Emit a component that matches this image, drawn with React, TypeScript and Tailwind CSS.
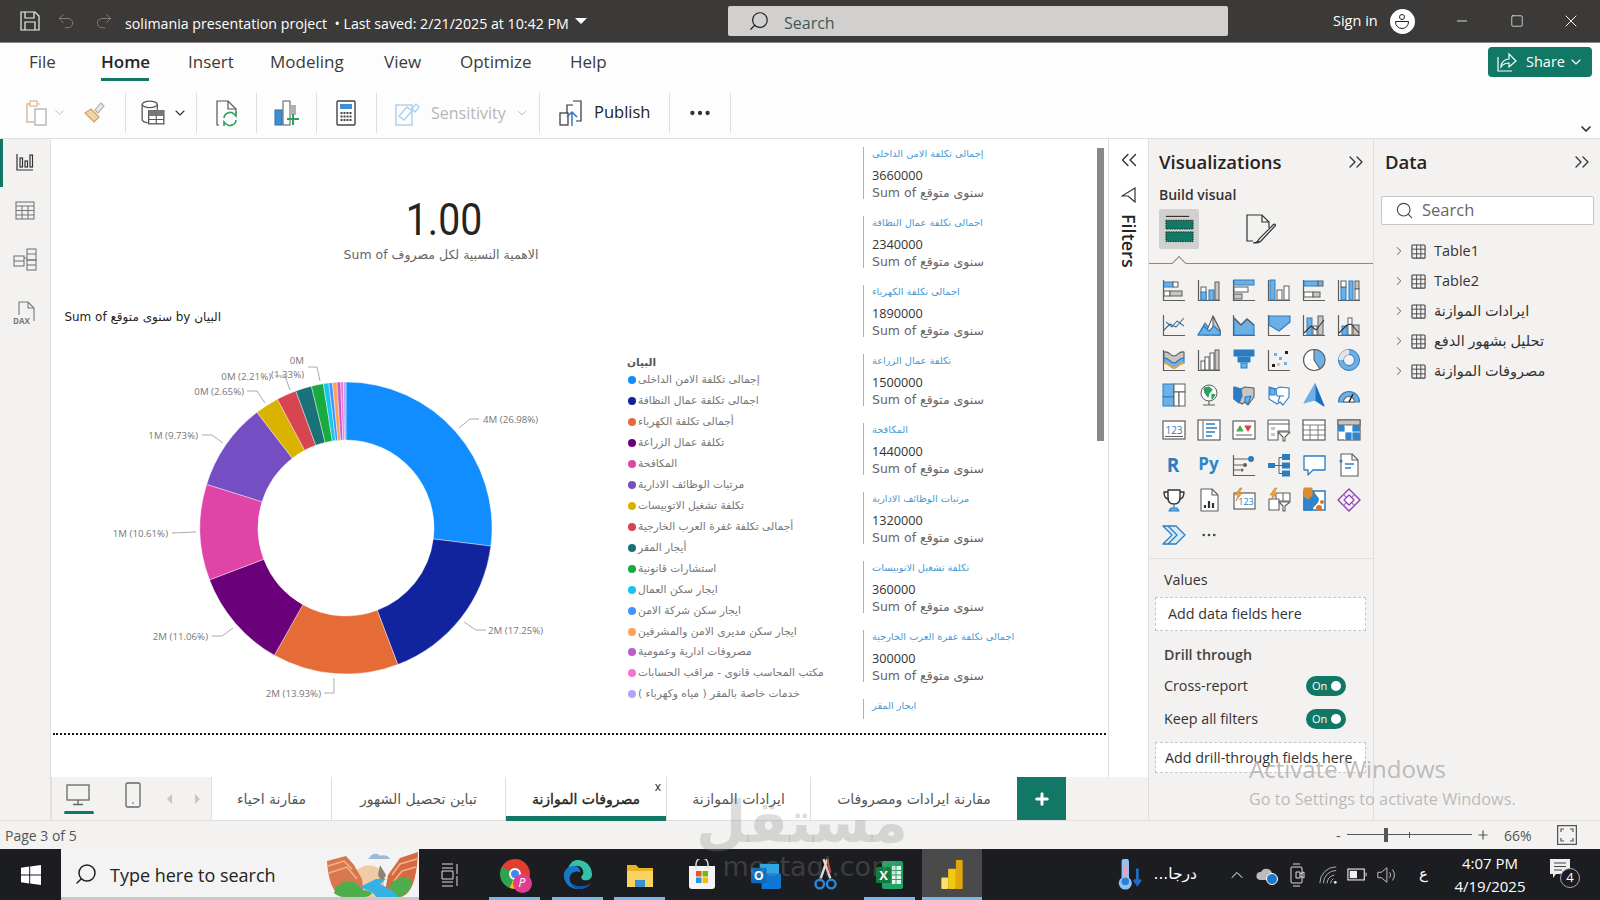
import React from 'react';
import { ChevronDown, ChevronRight, ChevronsLeft, ChevronsRight, Search, Minus, Square, X, Undo2, Redo2, MoreHorizontal, ChevronUp, Plus } from 'lucide-react';

const blue = '#6cb0e6';
const edge = '#2b7cc0';
const gray = '#c8c6c4';
const ink = '#5f5e5c';

const Ax = () => <path d="M1.5 2v20.5H23" stroke={ink} strokeWidth="1.2" fill="none" />;
const R = ({ x, y, w, h, f = blue, s = ink }: { x: number; y: number; w: number; h: number; f?: string; s?: string }) => (
  <rect x={x} y={y} width={w} height={h} fill={f} stroke={s} strokeWidth="1" />
);
const P = ({ d, f = 'none', s = ink, w = 1.1 }: { d: string; f?: string; s?: string; w?: number }) => (
  <path d={d} fill={f} stroke={s} strokeWidth={w} strokeLinejoin="round" />
);

const vizIcons: React.ReactNode[] = [
  <><Ax /><R x={2} y={4} w={9} h={5} s={edge} /><R x={11} y={4} w={5} h={5} f="#fff" /><R x={2} y={13} w={6} h={5} f="#fff" /><R x={8} y={13} w={12} h={5} f={gray} /></>,
  <><Ax /><R x={4} y={9} w={5} h={13} f="#fff" /><R x={4} y={14} w={5} h={8} s={edge} /><R x={12} y={12} w={5} h={10} s={edge} /><R x={18} y={4} w={4} h={18} f={gray} /></>,
  <><Ax /><R x={2} y={2} w={20} h={5} s={edge} /><R x={2} y={9} w={14} h={5} f="#fff" /><R x={2} y={16} w={8} h={5} f={gray} /></>,
  <><Ax /><R x={3} y={2} w={5} h={20} s={edge} /><R x={10} y={12} w={5} h={10} f="#fff" /><R x={17} y={8} w={5} h={14} f="#fff" /></>,
  <><Ax /><R x={2} y={3} w={14} h={5} s={edge} /><R x={16} y={3} w={5} h={5} /><R x={2} y={14} w={9} h={5} f="#fff" /><R x={11} y={14} w={7} h={5} f={gray} /></>,
  <><Ax /><R x={4} y={9} w={5} h={13} s={edge} /><R x={4} y={3} w={5} h={6} f="#fff" /><R x={12} y={3} w={4} h={19} s={edge} /><R x={18} y={3} w={4} h={8} f={gray} /><R x={18} y={11} w={4} h={11} f="#fff" /></>,
  <><Ax /><P d="M2 17l6-6 6 3 8-9" /><P d="M4 9l6 5 5-6 7 5" s={edge} /></>,
  <><P d="M1 22l7-12 4 5v7z" f={blue} s={edge} /><P d="M8 22l8-19 7 14v5z" f="#fff" /><P d="M16 3l7 14v5h-7z" f={gray} /><P d="M1 22l6-9 5 5 5-5 6 6v3z" f={blue} s={edge} /></>,
  <><Ax /><P d="M2 5l7 7 6-6 7 6v10H2z" f={blue} s={edge} /><P d="M2 5l7 7 6-6 7 6" s={ink} /></>,
  <><Ax /><P d="M2 3h21v6l-11 9-10-6z" f={blue} s={edge} /></>,
  <><Ax /><R x={5} y={5} w={5} h={17} s={edge} /><R x={16} y={3} w={5} h={19} f={gray} /><R x={11} y={13} w={4} h={9} f="#fff" /><P d="M2 20l7-7 5 4 8-10" s="#333" /></>,
  <><Ax /><R x={5} y={13} w={5} h={9} s={edge} /><R x={11} y={5} w={4} h={17} f="#fff" /><R x={16} y={12} w={6} h={10} f={gray} /><P d="M2 20l8-8 4-1 8 9" s="#333" /></>,
  <><Ax /><P d="M2 4c6-1 6 4 10 4s4-5 10-4v6c-6 0-6 5-10 5S8 10 2 10z" f={gray} /><P d="M2 10c6 0 6 5 10 5s4-5 10-5v5c-6 0-6 5-10 5s-4-5-10-5z" f={blue} s={edge} /><P d="M2 15c6 0 6 5 10 5s4-5 10-5" s="#e8a33d" w={2} /></>,
  <><Ax /><R x={4} y={13} w={4} h={9} f="#fff" /><R x={8} y={9} w={4} h={13} f="#fff" /><R x={13} y={5} w={4} h={17} f="#fff" /><R x={18} y={2} w={4} h={20} f={gray} /></>,
  <><R x={2} y={2} w={20} h={6} f={edge} s={edge} /><R x={6} y={9} w={12} h={5} f={edge} s={edge} /><R x={9} y={15} w={6} h={5} f={blue} s={edge} /></>,
  <><Ax /><rect x={5} y={16} width={3} height={3} fill="#222" /><rect x={7} y={5} width={3} height={3} fill={blue} /><rect x={12} y={9} width={3} height={3} fill={blue} /><rect x={18} y={3} width={3} height={3} fill="#222" /><rect x={17} y={14} width={3} height={3} fill={blue} /><rect x={10} y={15} width={3} height={3} fill={gray} /></>,
  <><circle cx={12} cy={12} r={10.5} fill="#fff" stroke={ink} strokeWidth="1.2" /><P d="M12 12V1.5A10.5 10.5 0 0 1 18 21z" f={blue} s={ink} /></>,
  <><circle cx={12} cy={12} r={8} stroke={blue} strokeWidth="5" /><circle cx={12} cy={12} r={10.5} stroke={edge} strokeWidth="1" /><circle cx={12} cy={12} r={5.5} stroke={edge} strokeWidth="1" /><path d="M4 12A8 8 0 0 1 12 4" stroke="#e4e4e4" strokeWidth="5" /></>,
  <><R x={1} y={1} w={11} h={13} s={edge} /><R x={1} y={14} w={11} h={9} s={edge} /><R x={12} y={1} w={11} h={8} f="#fff" /><R x={12} y={9} w={5} h={14} f="#fff" /><R x={17} y={9} w={6} h={14} f="#fff" /></>,
  <><circle cx={12} cy={10} r={8} fill="#fff" stroke={ink} /><P d="M7 5l5-1 3 3-3 3-1 4-3-4z" f="#2e9e5b" s="#2e9e5b" /><P d="M15 11l3 1-3 4z" f="#2e9e5b" s="#2e9e5b" /><P d="M6 22h12M12 18v4" /></>,
  <><P d="M2 4l7 2 4-2 9 1v9l-6 8-3-3-3 2-8-5z" f={gray} /><P d="M2 4l7 2 1 7-3 7-5-4z" f={edge} s={edge} /><P d="M13 14l6-1-3 8-3-2z" f={blue} s={edge} /></>,
  <><P d="M2 4l7 2 4-2 9 1v9l-6 8-3-3-3 2-8-5z" f="#fff" s={edge} /><P d="M9 6l1 7h7M13 13l-2 6" s={edge} /><P d="M3 5l5 1v6H3z" f={blue} s={edge} /></>,
  <><P d="M13 1l9 22-9-6z" f="#1b6fc0" s="#1b6fc0" /><P d="M13 1L2 20l11-3z" f={blue} s={blue} /></>,
  <><P d="M1.5 19a10.5 10.5 0 0 1 21 0z" f={blue} s={edge} /><P d="M6.5 19a5.5 5.5 0 0 1 11 0z" f="#fff" s={ink} /><P d="M12 19l4-8" s="#222" w={1.6} /></>,
  <><rect x={1} y={3} width={22} height={18} fill="#fff" stroke={ink} strokeWidth="1.2" /><text x={12} y={16} textAnchor="middle" fontSize="10" fill={edge} fontFamily="Open Sans">123</text><path d="M3 18.5h18" stroke={ink} /></>,
  <><rect x={1} y={2} width={22} height={20} fill="#fff" stroke={ink} strokeWidth="1.2" /><path d="M6 3v18" stroke={ink} /><path d="M9 6h9M9 10h11M9 14h9M9 18h6" stroke={edge} strokeWidth="1.5" /></>,
  <><rect x={1} y={3} width={22} height={18} fill="#fff" stroke={ink} strokeWidth="1.2" /><P d="M5 13l3-5 3 5z" f="#4ca85b" s="#4ca85b" /><P d="M13 8h6l-3 5z" f="#d64550" s="#d64550" /><path d="M4 17h16" stroke={ink} /></>,
  <><P d="M1 2h21v11H11v9H1z" f="#fff" /><path d="M1 6h21" stroke={ink} /><rect x={4} y={9} width={4} height={3} fill={gray} /><rect x={4} y={15} width={4} height={3} fill={gray} /><P d="M11 14h12l-5 5v4h-2v-4z" f="#fff" /></>,
  <><rect x={1} y={2} width={22} height={20} fill="#fff" stroke={ink} strokeWidth="1.2" /><path d="M1 7h22M1 12h22M1 17h22M8 7v15M16 7v15" stroke={ink} strokeWidth=".8" /></>,
  <><rect x={1} y={2} width={22} height={20} fill="#fff" stroke={ink} strokeWidth="1.2" /><rect x={1} y={2} width={22} height={5} fill={gray} stroke={ink} /><rect x={1} y={7} width={7} height={7} fill="#2f86cf" /><rect x={15} y={7} width={8} height={7} fill="#2f86cf" /><rect x={8} y={14} width={7} height={8} fill="#2f86cf" /><rect x={15} y={14} width={8} height={8} fill="#2f86cf" /><path d="M8 7v15M15 7v15M1 14h22" stroke="#fff" strokeWidth=".8" /></>,
  <text x={11} y={19} textAnchor="middle" fontSize="19" fontWeight="700" fill="#2b7cc0" fontFamily="Open Sans">R</text>,
  <text x={11.500} y={17} textAnchor="middle" fontSize="17" fontWeight="700" fill="#2b88c8" fontFamily="Open Sans">Py</text>,
  <><Ax /><path d="M2 6h14M2 12h9M2 17h6" stroke={ink} /><circle cx={19} cy={6} r={3} fill={edge} /><circle cx={13} cy={12} r={2} fill={ink} /><circle cx={10} cy={17} r={1.5} fill={ink} /></>,
  <><rect x={1} y={10} width={7} height={5} fill={edge} /><path d="M8 12.500h4M12 4.500v16M12 4.500h3M12 12.500h3M12 20.500h3" stroke={ink} /><rect x={15} y={1} width={8} height={6} fill={edge} /><rect x={15} y={9.500} width={8} height={6} fill={edge} /><rect x={15} y={17.500} width={8} height={6} fill={edge} /></>,
  <P d="M2 3h21v14H11l-5 5v-5H2z" f="#fff" s={edge} w={1.3} />,
  <><P d="M4 1h11l6 6v16H4z" f="#fff" /><P d="M15 1v6h6" /><circle cx={4} cy={8} r={1.6} fill={edge} /><path d="M8 11h9" stroke={edge} strokeWidth="1.5" /><path d="M8 15h6" stroke={edge} strokeWidth="1.5" /></>,
  <><P d="M6 2h12v8c0 4-2.500 6-6 6s-6-2-6-6z" f="#fff" s="#333" w={1.4} /><P d="M6 4H2c0 5 2 7 5 7M18 4h4c0 5-2 7-5 7" s="#333" w={1.4} /><P d="M12 16v4M7 23l2-3h6l2 3z" f={blue} s={edge} w={1.2} /></>,
  <><P d="M4 1h11l6 6v16H4z" f="#fff" /><P d="M15 1v6h6" /><path d="M8 20v-3M12 20v-7M16 20v-5" stroke="#333" strokeWidth="2.200" /></>,
  <><rect x={2} y={5} width={21} height={16} fill="#fff" stroke={ink} strokeWidth="1.2" /><text x={14} y={17} textAnchor="middle" fontSize="9" fill={edge} fontFamily="Open Sans">123</text><P d="M8 0L3 7h3l-2 6 6-8H7l3-5z" f="#e8a33d" s="#c9821c" w={.6} /></>,
  <><P d="M9 5h14v8H12v9H2V11h7z" f="#fff" /><path d="M9 11h3v2M16 5v8" stroke={ink} /><P d="M12 14h11l-5 4v5h-2v-5z" f="#fff" /><P d="M8 0L3 7h3l-2 5 6-7H7l3-5z" f="#e8a33d" s="#c9821c" w={.6} /></>,
  <><rect x={2} y={3} width={21} height={19} fill="#fff" stroke={edge} strokeWidth="1.5" /><P d="M12 3c-1 5 6 5 4 10s-5 3-6 9h-8V10h6V3z" f="#2f86cf" s={edge} /><P d="M2 0h8v7l-4 4-4-4z" f="#de8a2c" s="#de8a2c" /><circle cx={20} cy={14} r={2} fill="#d9762a" /><circle cx={17} cy={20} r={3} fill="#d9762a" /></>,
  <><P d="M12 1l11 11-11 11L1 12z" f="none" s="#8d3db8" w={1.4} /><P d="M6.500 6.500l11 11M17.500 6.500l-11 11" s="#b56ad6" w={1.2} /><P d="M12 7l5 5-5 5-5-5z" f="#fff" s="#8d3db8" w={1.2} /></>,
  <><P d="M1 3h13l9 9-9 9H1l9-9z" f="#d6ecfb" s={edge} w={1.3} /><P d="M6 3l9 9-9 9" s={edge} w={1.3} /></>,
  <MoreHorizontal size={18} strokeWidth={1.6} color="#444" x={3} y={3} />,
];

const legend: [string, string][] = [
  ['#118DFF', 'إجمالى  تكلفة الامن  الداخلى'],
  ['#12239E', 'اجمالى تكلفة عمال النظافة'],
  ['#E66C37', 'أجمالى تكلفة الكهرباء'],
  ['#6B007B', 'تكلفة عمال الزراعة'],
  ['#E044A7', 'المكافحة'],
  ['#744EC2', 'مرتبات الوظائف الادارية'],
  ['#D9B300', 'تكلفة تشغيل الاتوبيسات'],
  ['#D64550', 'أجمالى تكلفة غفرة العرب الخارجية'],
  ['#197278', 'أيجار المقر'],
  ['#1AAB40', 'استشارات قانونية'],
  ['#15C6F4', 'ايجار سكن العمال'],
  ['#4092FF', 'ايجار سكن شركة الامن'],
  ['#FFA058', 'ايجار سكن مديرى الامن والمشرفين'],
  ['#BE5DC9', 'مصروفات ادارية وعمومية'],
  ['#F472D0', 'مكتب المحاسب قانوى - مراقب الحسابات'],
  ['#B5A1FF', 'خدمات خاصة بالمقر ( مياه وكهرباء )'],
];

const shares = [26.98, 17.25, 13.93, 11.06, 10.61, 9.73, 2.65, 2.21, 1.77, 1.33, 0.6, 0.4, 0.5, 0.4, 0.3, 0.28];

const cards: [string, string][] = [
  ['إجمالى تكلفة الامن الداخلى', '3660000'],
  ['اجمالى تكلفة عمال النظافة', '2340000'],
  ['اجمالى تكلفة الكهرباء', '1890000'],
  ['تكلفة عمال الزراعة', '1500000'],
  ['المكافحة', '1440000'],
  ['مرتبات الوظائف الادارية', '1320000'],
  ['تكلفة تشغيل الاتوبيسات', '360000'],
  ['اجمالى تكلفة غفرة العرب الخارجية', '300000'],
];

const labels: { t: string; x: number; y: number; a?: 'end'; d: string }[] = [
  { t: '4M (26.98%)', x: 483, y: 423, d: 'M459 428L470 419H479' },
  { t: '2M (17.25%)', x: 488, y: 634, d: 'M464 622L476 630H486' },
  { t: '2M (13.93%)', x: 321, y: 697, a: 'end', d: 'M334 678V693H324' },
  { t: '2M (11.06%)', x: 208, y: 640, a: 'end', d: 'M233 628L222 636H212' },
  { t: '1M (10.61%)', x: 168, y: 537, a: 'end', d: 'M196 532L172 533' },
  { t: '1M (9.73%)', x: 198, y: 439, a: 'end', d: 'M223 443L212 435H202' },
  { t: '0M (2.65%)', x: 244, y: 395, a: 'end', d: 'M265 403L257 391H247' },
  { t: '0M (2.21%)', x: 271, y: 380, a: 'end', d: 'M290 390L285 376H275' },
  { t: '(1.33%)', x: 304, y: 378, a: 'end', d: 'M320 381L317 367H308' },
  { t: '0M', x: 304, y: 364, a: 'end', d: '' },
];

function Donut() {
  const cx = 346, cy = 528, R0 = 146, r0 = 88;
  let acc = 0;
  const pt = (rad: number, a: number) => `${(cx + rad * Math.sin(a)).toFixed(2)} ${(cy - rad * Math.cos(a)).toFixed(2)}`;
  return (
    <svg viewBox="100 340 460 370" width={460} height={370} className="shrink-0">
      {shares.map((s, i) => {
        const a0 = (acc / 100) * Math.PI * 2;
        acc += s;
        const a1 = (acc / 100) * Math.PI * 2;
        const big = a1 - a0 > Math.PI ? 1 : 0;
        return (
          <path
            key={i}
            d={`M${pt(R0, a0)}A${R0} ${R0} 0 ${big} 1 ${pt(R0, a1)}L${pt(r0, a1)}A${r0} ${r0} 0 ${big} 0 ${pt(r0, a0)}Z`}
            fill={legend[i][0]}
            stroke="#fff"
            strokeWidth="0.4"
          />
        );
      })}
      {labels.map((l) => (
        <g key={l.t}>
          {l.d && <path d={l.d} stroke="#aaa" fill="none" strokeWidth="1" />}
          <text x={l.x} y={l.y} textAnchor={l.a ?? 'start'} fontSize="9.700" fill="#777">{l.t}</text>
        </g>
      ))}
    </svg>
  );
}

function Ribbon() {
  const Sep = () => <div className="w-px h-[40px] bg-[#e1dfdd]" />;
  return (
    <div className="h-[47px] flex items-center pl-[25px] pb-[4px] bg-[#fdfdfd] text-[#b8b6b4]">
      <svg viewBox="0 0 24 26" className="w-[24px] h-[26px]" fill="none">
        <path d="M8 4H2v18h7" stroke="#e2b48a" strokeWidth="1.4" /><rect x="5" y="1" width="7" height="5" fill="#fff" stroke="#e2b48a" strokeWidth="1.2" /><path d="M15 4h-3" stroke="#e2b48a" /><rect x="10" y="9" width="11" height="16" fill="#fff" stroke="#aaa" strokeWidth="1.2" />
      </svg>
      <ChevronDown size={15} className="ml-[3px]" strokeWidth={1.4} />
      <svg viewBox="0 0 24 24" className="w-[24px] h-[24px] ml-[15px]" fill="none">
        <path d="M3 12l9 9 5-5c-3-3-6-6-8-8z" fill="#f2d2a8" stroke="#c9a06f" strokeWidth="1.1" /><path d="M13 9l6-7 3 3-6 7z" fill="#e9e9e9" stroke="#aaa" strokeWidth="1.1" />
      </svg>
      <div className="ml-[19px]"><Sep /></div>
      <svg viewBox="0 0 24 24" className="w-[26px] h-[26px] ml-[14px]" fill="none">
        <ellipse cx="9" cy="4" rx="7" ry="3" stroke="#555" strokeWidth="1.2" /><path d="M2 4v14c0 1.500 2 2.500 5 3M16 4v5" stroke="#555" strokeWidth="1.2" /><rect x="8" y="10" width="14" height="12" fill="#fff" stroke="#555" strokeWidth="1.2" /><path d="M8 14h14M8 18h14M15 10v12" stroke="#555" /><rect x="8" y="10" width="14" height="4" fill="#777" />
      </svg>
      <ChevronDown size={16} className="ml-[6px] text-[#333]" strokeWidth={1.6} />
      <div className="ml-[8px]"><Sep /></div>
      <svg viewBox="0 0 24 28" className="w-[24px] h-[28px] ml-[18px]" fill="none">
        <path d="M4 26H2V2h11l8 8v4" stroke="#555" strokeWidth="1.200" /><path d="M13 2v8h8" stroke="#555" strokeWidth="1.2" /><path d="M9 19a6 6 0 0 1 10-4l2 2v-4M21 21a6 6 0 0 1-10 4l-2-2v4" stroke="#2e9e5b" strokeWidth="1.6" />
      </svg>
      <div className="ml-[17px]"><Sep /></div>
      <svg viewBox="0 0 26 28" className="w-[26px] h-[28px] ml-[17px]" fill="none">
        <rect x="1" y="11" width="7" height="15" fill="#3b8fd8" stroke="#2b6fb0" /><rect x="9" y="2" width="7" height="24" fill="#fff" stroke="#555" /><rect x="16" y="6" width="6" height="10" fill="#b3b0ad" /><path d="M19 15v11M13 20h12" stroke="#2e9e5b" strokeWidth="2" />
      </svg>
      <div className="ml-[16px]"><Sep /></div>
      <svg viewBox="0 0 20 26" className="w-[20px] h-[26px] ml-[19px]" fill="none">
        <rect x="1" y="1" width="18" height="24" rx="1" fill="#fff" stroke="#444" strokeWidth="1.4" /><rect x="4" y="4" width="12" height="5" fill="#3b8fd8" /><path d="M4.500 13h11M4.500 16.500h11M4.500 20h11" stroke="#444" strokeWidth="2" strokeDasharray="2 1" />
      </svg>
      <div className="ml-[20px]"><Sep /></div>
      <svg viewBox="0 0 26 28" className="w-[26px] h-[28px] ml-[18px]" fill="none">
        <rect x="1" y="6" width="16" height="20" stroke="#a9cfee" strokeWidth="1.4" /><path d="M4 17l8-9 5 4-8 9zM17 10l4-5 3 3-4 5z" stroke="#a9cfee" strokeWidth="1.3" fill="#fff" />
      </svg>
      <span className="ml-[10px] text-[16px] w-[77px] whitespace-nowrap">Sensitivity</span>
      <ChevronDown size={16} strokeWidth={1.3} className="ml-[6px]" />
      <div className="ml-[9px]"><Sep /></div>
      <svg viewBox="0 0 24 28" className="w-[24px] h-[28px] ml-[19px]" fill="none">
        <rect x="1" y="14" width="8" height="12" stroke="#333" strokeWidth="1.2" /><path d="M8 14V6h6M14 2h8v20h-5" stroke="#333" strokeWidth="1.2" /><path d="M13 27V13M8 18l5-5 5 5" stroke="#2b7cc0" strokeWidth="1.5" />
      </svg>
      <span className="ml-[11px] text-[16.500px] w-[56px] text-[#252423]">Publish</span>
      <div className="ml-[19px]"><Sep /></div>
      <MoreHorizontal size={26} strokeWidth={2} className="ml-[17px] text-[#333]" />
      <div className="ml-[17px]"><Sep /></div>
      <ChevronDown size={16} strokeWidth={2.6} className="absolute left-[1578px] top-[121px] text-[#333]" />
    </div>
  );
}

function ReportCanvas() {
  return (
    <div className="w-[1057px] h-[638px] bg-white overflow-hidden">
      <div className="flex h-[594px]">
        <div className="w-[812px] shrink-0">
          <div className="w-[780px] pt-[51px] text-center">
            <div className="text-[45px] leading-[60px] font-['Roboto',sans-serif] text-[#252423] scale-x-[0.87] ml-[6px]">1.00</div>
            <div dir="rtl" className="text-[12.500px] leading-[16px] -mt-[3px] text-[#666] font-['DejaVu_Sans',sans-serif]">الاهمية النسبية لكل مصروف Sum of</div>
          </div>
          <div dir="rtl" className="w-[155px] ml-[15px] mt-[46px] text-[12px] leading-[16px] text-[#252423] whitespace-nowrap font-['DejaVu_Sans',sans-serif] text-left">
            <span dir="ltr">Sum of سنوى متوقع by البيان</span>
          </div>
          <div className="flex ml-[49px] mt-[15px]">
            <Donut />
            <div className="ml-[67px] mt-[15px] font-['DejaVu_Sans',sans-serif] w-[240px]">
              <div className="text-[10.500px] leading-[15px] font-bold text-[#555]">البيان</div>
              {legend.map(([c, t]) => (
                <div key={c} className="h-[20.930px] flex items-center text-[10.700px] text-[#777] whitespace-nowrap">
                  <span className="w-[8px] h-[8px] rounded-full mr-[2px] shrink-0 ml-[1px]" style={{ backgroundColor: c }} />
                  <span dir="rtl">{t}</span>
                </div>
              ))}
            </div>
          </div>
        </div>
        <div className="w-[234px] shrink-0 pt-[8px] overflow-hidden h-[580px]">
          {cards.map(([t, v]) => (
            <div key={v} className="h-[69px]">
              <div className="h-[52px] border-l-[1.500px] border-[#b3b0ad] pl-[8px] font-['DejaVu_Sans',sans-serif] whitespace-nowrap">
                <div dir="rtl" className="w-fit text-[9.800px] leading-[14px] text-[#4a9bd4]">{t}</div>
                <div className="text-[12.700px] leading-[20px] mt-[4px] text-[#333] font-['Open_Sans',sans-serif]">{v}</div>
                <div className="text-[12.500px] leading-[16px] text-[#666]" dir="ltr">Sum of <span dir="rtl">سنوى متوقع</span></div>
              </div>
            </div>
          ))}
          <div className="border-l-[1.500px] border-[#b3b0ad] pl-[8px] h-[20px]">
            <div dir="rtl" className="w-fit text-[9.800px] leading-[14px] text-[#4a9bd4] font-['DejaVu_Sans',sans-serif]">ايجار المقر</div>
          </div>
        </div>
        <div className="w-[7px] h-[293px] mt-[9px] bg-[#8a8886]" />
      </div>
      <div className="w-[1053px] ml-[2px] border-b-2 border-dotted border-[#111]" />
    </div>
  );
}

function Tabs() {
  const Tab = ({ t, w, active }: { t: string; w: number; active?: boolean }) => (
    <div style={{ width: w }} className={`relative h-[44px] flex items-center justify-center border-l border-[#e1dfdd] text-[14px] font-['DejaVu_Sans',sans-serif] ${active ? 'text-[#252423]' : 'text-[#555]'}`}>
      <span dir="rtl" className={active ? '[-webkit-text-stroke:0.35px_#252423]' : ''}>{t}</span>
      {active && <span className="absolute right-[5px] top-[3px] text-[12px] leading-[14px] font-['Open_Sans',sans-serif] text-[#222]">x</span>}
      {active && <div className="absolute left-0 right-0 bottom-0 h-[5px] bg-[#117865]" />}
    </div>
  );
  return (
    <div className="h-[44px] w-[1097px] bg-[#f3f2f1] flex">
      <div className="w-[160px] flex items-center border-l border-[#e1dfdd] relative">
        <svg viewBox="0 0 24 22" className="w-[24px] h-[22px] ml-[14px] -mt-[9px]" fill="none"><rect x="1" y="1" width="22" height="15" stroke="#666" strokeWidth="1.3" /><path d="M12 16v4M7 20.500h10" stroke="#666" strokeWidth="1.3" /></svg>
        <div className="absolute left-[12px] bottom-[7px] w-[30px] h-[3px] bg-[#117865] rounded-full" />
        <svg viewBox="0 0 16 26" className="w-[16px] h-[26px] ml-[35px] -mt-[8px]" fill="none"><rect x="1" y="1" width="14" height="24" rx="1.500" stroke="#666" strokeWidth="1.3" /><path d="M7 21h2" stroke="#666" /></svg>
        <span className="ml-[26px] w-0 h-0 border-y-[5px] border-y-transparent border-r-[5px] border-r-[#c8c6c4]" />
        <span className="ml-[23px] w-0 h-0 border-y-[5px] border-y-transparent border-l-[5px] border-l-[#c8c6c4]" />
      </div>
      <div className="flex bg-white">
        <Tab t="مقارنة احياء" w={120} />
        <Tab t="تباين تحصيل الشهور" w={174} />
        <Tab t="مصروفات الموازنة" w={161} active />
        <Tab t="ايرادات الموازنة" w={144} />
        <Tab t="مقارنة ايرادات ومصروفات" w={207} />
      </div>
      <div className="w-[49px] h-[44px] bg-[#117865] text-white flex items-center justify-center"><Plus size={18} strokeWidth={4} /></div>
    </div>
  );
}

function VizPane() {
  return (
    <div className="w-[226px] border-x border-[#e1dfdd] bg-[#f3f2f1] shrink-0 relative">
      <div className="h-[46px] flex items-center justify-between pl-[10px] pr-[5px]">
        <span className="text-[18.500px] font-semibold text-[#252423]">Visualizations</span>
        <ChevronsRight size={24} strokeWidth={1.3} className="text-[#333]" />
      </div>
      <div className="pl-[10px] text-[14px] leading-[20px] font-semibold text-[#333]">Build visual</div>
      <div className="flex items-center pl-[10px] h-[40px] mt-[4px]">
        <div className="w-[40px] h-[40px] bg-[#d2d0ce] rounded-[2px] flex items-center justify-center">
          <svg viewBox="0 0 32 28" className="w-[31px] h-[28px]" fill="none"><path d="M2 1h24" stroke="#333" strokeWidth="1.200" /><rect x="2" y="5" width="28" height="9" fill="#117865" stroke="#222" strokeDasharray="1.500 1" /><rect x="2" y="17" width="28" height="10" fill="#117865" stroke="#222" strokeDasharray="1.500 1" /></svg>
        </div>
        <svg viewBox="0 0 32 32" className="w-[32px] h-[32px] ml-[46px]" fill="none"><path d="M8 28H2V2h15l7 7v6M17 2v7h7" stroke="#333" strokeWidth="1.200" /><path d="M8 30c3 0 5-1 6-4l14-14c2-2 3 0 2 1L16 28c-2 2-6 2-8 2z" stroke="#333" strokeWidth="1.200" /></svg>
      </div>
      <div className="relative h-[15px] border-b border-[#8a8886]">
        <div className="absolute left-[25px] top-[9px] w-[10px] h-[10px] rotate-45 bg-[#f3f2f1] border-l border-t border-[#8a8886]" />
      </div>
      <div className="grid grid-cols-[repeat(6,35px)] auto-rows-[35px] pl-[7px] pt-[8px]">
        {vizIcons.map((ic, i) => (
          <div key={i} className="flex items-center justify-center">
            <svg viewBox="0 0 24 24" className="w-[24px] h-[24px] overflow-visible" fill="none">{ic}</svg>
          </div>
        ))}
      </div>
      <div className="border-t border-[#e1dfdd] mt-[6px] pt-[11px] pl-[6px] pr-[7px]">
        <div className="pl-[9px] text-[14.300px] leading-[20px] text-[#333]">Values</div>
        <div className="h-[34px] mt-[7px] bg-white border border-dashed border-[#c8c6c4] flex items-center pl-[12px] text-[14.300px] text-[#333]">Add data fields here</div>
        <div className="pl-[9px] mt-[14px] text-[14.300px] leading-[20px] font-semibold text-[#444]">Drill through</div>
        <div className="flex items-center justify-between pl-[9px] pr-[20px] mt-[11px] h-[20px] text-[14.300px] text-[#333]">
          <span>Cross-report</span>
          <div className="w-[40px] h-[20px] rounded-full bg-[#117865] flex items-center justify-between pl-[6px] pr-[5px] text-[11px] text-white">On<span className="w-[10px] h-[10px] rounded-full bg-white" /></div>
        </div>
        <div className="flex items-center justify-between pl-[9px] pr-[20px] mt-[13px] h-[20px] text-[14.300px] text-[#333]">
          <span>Keep all filters</span>
          <div className="w-[40px] h-[20px] rounded-full bg-[#117865] flex items-center justify-between pl-[6px] pr-[5px] text-[11px] text-white">On<span className="w-[10px] h-[10px] rounded-full bg-white" /></div>
        </div>
        <div className="h-[31px] mt-[13px] bg-white border border-dashed border-[#c8c6c4] flex items-center pl-[9px] text-[14.300px] text-[#333] whitespace-nowrap">Add drill-through fields here</div>
      </div>
    </div>
  );
}

function DataPane() {
  const rows = ['Table1', 'Table2', 'ايرادات الموازنة', 'تحليل بشهور الدفع', 'مصروفات الموازنة'];
  return (
    <div className="w-[226px] bg-[#f3f2f1] shrink-0">
      <div className="h-[46px] flex items-center justify-between pl-[11px] pr-[6px]">
        <span className="text-[18.500px] font-semibold text-[#252423]">Data</span>
        <ChevronsRight size={24} strokeWidth={1.3} className="text-[#333]" />
      </div>
      <div className="h-[29px] mt-[11px] ml-[7px] mr-[6px] bg-white border border-[#c8c6c4] rounded-[2px] flex items-center pl-[13px] text-[#666] text-[16.500px]">
        <Search size={19} strokeWidth={1.4} className="mr-[8px] text-[#444]" />Search
      </div>
      <div className="mt-[11px]">
        {rows.map((r) => (
          <div key={r} className="h-[30px] flex items-center pl-[18px] text-[14.500px] text-[#333]">
            <ChevronRight size={14} strokeWidth={1.4} className="text-[#444]" />
            <svg viewBox="0 0 16 16" className="w-[15px] h-[15px] ml-[5px]" fill="none"><rect x="1" y="1" width="14" height="14" rx="1" stroke="#444" strokeWidth="1.200" /><path d="M1 5.500h14M1 10.500h14M6 1v14M10.500 1v14" stroke="#444" /></svg>
            <span dir="rtl" className="ml-[8px] font-['Open_Sans','DejaVu_Sans',sans-serif]">{r}</span>
          </div>
        ))}
      </div>
    </div>
  );
}

function TaskBar() {
  const Slot = ({ w, ml = 0, on, active, children }: { w: number; ml?: number; on?: boolean; active?: boolean; children: React.ReactNode }) => (
    <div style={{ width: w, marginLeft: ml }} className={`relative h-[51px] flex items-center justify-center shrink-0 ${active ? 'bg-[#4a4a4a]' : ''}`}>
      {children}
      {on && <div className="absolute left-0 right-0 bottom-0 h-[3px] bg-[#76b9ed]" />}
    </div>
  );
  return (
    <div className="h-[51px] bg-[#1c1d20] flex text-white">
      <div className="w-[61px] flex items-center justify-center">
        <svg viewBox="0 0 20 20" className="w-[20px] h-[20px]" fill="#fff"><path d="M0 2.800L8.200 1.600V9.500H0zM9.200 1.500L20 0V9.500H9.200zM0 10.500H8.200V18.400L0 17.200zM9.200 10.500H20V20L9.200 18.500z" /></svg>
      </div>
      <div className="w-[358px] bg-[#f3f3f3] flex items-center pl-[13px] text-[#222] text-[18px] overflow-hidden border-b-[3px] border-[#c8c8c8]">
        <Search size={24} strokeWidth={1.5} className="scale-x-[-1] text-[#222] shrink-0 mt-[2px]" />
        <span className="ml-[12px] mt-[5px] w-[214px] shrink-0 whitespace-nowrap">Type here to search</span>
        <svg viewBox="0 0 95 48" className="w-[95px] h-[48px] shrink-0">
          <path d="M46 8c2-4 8-4 10-1 4-2 9 0 10 3H44z" fill="#9db9d8" />
          <path d="M30 48V24c8-10 22-10 30 0v24z" fill="#efcba6" />
          <path d="M56 16l6 10-4 8-4-8z" fill="#8d8278" />
          <path d="M3 12L22 7l8 9 8 14 2 18H20C8 46 4 28 3 12z" fill="#d9784f" />
          <path d="M4 17l16-5 8 8M5 24l18-6 10 12" stroke="#f2b48c" strokeWidth="1.500" fill="none" />
          <path d="M94 3L76 9 64 26l-4 22h16c12-2 17-20 18-45z" fill="#d56a43" />
          <path d="M93 10L76 15 68 26M92 18L78 22 70 32" stroke="#f2b48c" strokeWidth="1.500" fill="none" />
          <path d="M10 44c2-8 8-12 14-11 6-2 12 4 14 8 4 0 8 1 10 3-1 2-4 4-8 4H20c-4 0-8-2-10-4z" fill="#4fae4c" />
          <path d="M66 36c4-6 12-8 18-8 3 2 4 6 3 10-2 4-6 8-12 10h-8z" fill="#4fae4c" />
          <path d="M36 38l16-8 10 0-6 5c4 2 14 6 18 13H52c-2-5-8-6-16-10z" fill="#36b1e4" />
        </svg>
      </div>
      <Slot w={51} ml={5}>
        <svg viewBox="0 0 20 24" className="w-[20px] h-[24px]" fill="none" stroke="#ddd"><path d="M2 1h11M2 5h11M2 8h11v8H2zM2 19h11M2 23h11M17 1v10M17 13v10" /></svg>
      </Slot>
      <Slot w={51} ml={14} on>
        <div className="relative w-[30px] h-[32px]">
          <div className="absolute w-[30px] h-[30px] rounded-full bg-[conic-gradient(#e23f33_0deg_120deg,#f4bb13_120deg_200deg,#2fa44f_200deg_300deg,#e23f33_300deg)]" />
          <div className="absolute left-[9px] top-[9px] w-[12px] h-[12px] rounded-full bg-[#3f88ef] border-2 border-white" />
          <div className="absolute right-[-2px] bottom-[-2px] w-[19px] h-[19px] rounded-full bg-[#df3d8e] text-[12px] italic text-white flex items-center justify-center">P</div>
        </div>
      </Slot>
      <Slot w={51} ml={12} on>
        <svg viewBox="0 0 32 32" className="w-[31px] h-[31px]"><path d="M16 1c9 0 15 7 15 15 0 3-2 6-6 6-3 0-5-1-5-3 0-2 2-2 2-5 0-4-3-7-7-7-5 0-9 4-10 8C6 7 10 1 16 1z" fill="#35c1a8" /><path d="M2 15c1-4 5-8 10-8 4 0 7 3 7 7-6-3-12 1-11 8 1 5 6 9 12 9-2 0-3 0-4 0C8 31 1 24 2 15z" fill="#1678c9" /><path d="M20 31c-6 0-11-4-12-9 1 4 6 6 11 6 4 0 8-1 11-3-2 3-6 6-10 6z" fill="#1154a8" /></svg>
      </Slot>
      <Slot w={51} ml={11} on>
        <svg viewBox="0 0 28 26" className="w-[28px] h-[26px]"><path d="M1 3h9l3 3h14v6H1z" fill="#e8b423" /><rect x="1" y="9" width="26" height="16" fill="#f7d35f" /><rect x="9" y="18" width="10" height="7" fill="#3a8fd0" /></svg>
      </Slot>
      <Slot w={51} ml={11}>
        <svg viewBox="0 0 30 32" className="w-[30px] h-[32px]"><path d="M2 7h26v20a3 3 0 0 1-3 3H5a3 3 0 0 1-3-3z" fill="#f4f4f4" /><path d="M9 10V5a6 6 0 0 1 12 0v5" stroke="#ddd" strokeWidth="1.500" fill="none" /><rect x="9" y="12" width="5.500" height="5.500" fill="#e8552c" /><rect x="15.500" y="12" width="5.500" height="5.500" fill="#76b900" /><rect x="9" y="18.500" width="5.500" height="5.500" fill="#1c9ce8" /><rect x="15.500" y="18.500" width="5.500" height="5.500" fill="#f7b80e" /></svg>
      </Slot>
      <Slot w={51} ml={13}>
        <svg viewBox="0 0 32 30" className="w-[31px] h-[29px]"><path d="M10 4h20v14H10z" fill="#28a8ea" /><path d="M12 14h20v14a2 2 0 0 1-2 2H12z" fill="#0f78d4" /><rect x="1" y="8" width="16" height="16" rx="2" fill="#0f6cbd" /><text x="9" y="21" textAnchor="middle" fontSize="13" fill="#fff" fontFamily="Open Sans" fontWeight="700">O</text></svg>
      </Slot>
      <Slot w={51} ml={9}>
        <svg viewBox="0 0 24 34" className="w-[23px] h-[33px]" fill="none"><path d="M14 1L7 21M10 1l7 20" stroke="#ddd" strokeWidth="2.500" /><path d="M14 1l3 14" stroke="#e23f33" strokeWidth="2" /><circle cx="6" cy="27" r="4.500" stroke="#2b88d8" strokeWidth="2.500" /><circle cx="18" cy="27" r="4.500" stroke="#2b88d8" strokeWidth="2.500" /></svg>
      </Slot>
      <Slot w={51} ml={13} on>
        <svg viewBox="0 0 28 30" className="w-[28px] h-[30px]"><rect x="6" y="1" width="21" height="28" rx="2" fill="#21a366" /><rect x="16" y="6" width="9" height="18" fill="#e8f5ee" /><path d="M16 10.500h9M16 15h9M16 19.500h9M20 6v18" stroke="#21a366" strokeWidth="1" /><rect x="0" y="7" width="15" height="16" rx="1.500" fill="#107c41" /><text x="7.500" y="20" textAnchor="middle" fontSize="13" fontFamily="Open Sans" fontWeight="700" fill="#fff">X</text></svg>
      </Slot>
      <Slot w={60} ml={7} on active>
        <svg viewBox="0 0 24 32" className="w-[24px] h-[31px]"><rect x="1" y="19" width="7" height="12" rx="1" fill="#f7e26b" /><rect x="8" y="10" width="8" height="21" rx="1" fill="#f2c811" /><rect x="16" y="1" width="7" height="30" rx="1" fill="#e2a70d" /></svg>
      </Slot>
      <div className="ml-[134px] flex items-center h-[51px]">
        <svg viewBox="0 0 28 34" className="w-[26px] h-[32px]"><path d="M8 2a4 4 0 0 1 8 0v17a7 7 0 1 1-8 0z" fill="#8fc3f2" transform="translate(-2 1)" /><path d="M8 6h4v13H8z" fill="#e5a3c0" /><circle cx="10" cy="24" r="4" fill="#2b7fd4" /><path d="M23 10v16M19.500 22l3.500 5 3.500-5" stroke="#1b6fc0" strokeWidth="3" fill="none" /></svg>
        <span dir="rtl" className="ml-[12px] text-[15.500px] w-[43px] font-['DejaVu_Sans',sans-serif]">درجا...</span>
        <ChevronUp size={20} strokeWidth={1.2} className="ml-[30px]" />
        <svg viewBox="0 0 24 20" className="w-[24px] h-[20px] ml-[8px]"><path d="M5 15a4 4 0 0 1 1-8 6 6 0 0 1 11 1 4 4 0 0 1 1 7z" fill="#bbb" /><circle cx="17" cy="14" r="5.500" fill="#1b78c8" stroke="#fff" /></svg>
        <svg viewBox="0 0 16 24" className="w-[16px] h-[24px] ml-[11px]" fill="none" stroke="#ddd"><path d="M3 1h7M3 23h7" /><rect x="1" y="4" width="11" height="16" rx="1" /><path d="M6 9h4v6H6zM10 11l4-2v6l-4-2" /></svg>
        <svg viewBox="0 0 22 22" className="w-[20px] h-[20px] ml-[12px]" fill="none" stroke="#bbb"><path d="M2 20A18 18 0 0 1 20 2M6 20A14 14 0 0 1 20 6M10 20a10 10 0 0 1 8-9M14 20a6 6 0 0 1 3-5" /><circle cx="19" cy="19" r="1.500" fill="#eee" stroke="none" /></svg>
        <svg viewBox="0 0 22 14" className="w-[20px] h-[13px] ml-[9px]" fill="none"><rect x="1" y="1" width="18" height="12" stroke="#eee" strokeWidth="1.200" /><rect x="3" y="3" width="8" height="8" fill="#eee" /><path d="M21 5v4" stroke="#eee" /></svg>
        <svg viewBox="0 0 22 22" className="w-[20px] h-[20px] ml-[9px]" fill="none" stroke="#ccc"><path d="M2 8v6h4l6 5V3L6 8zM15 8a5 5 0 0 1 0 6M18 5a9 9 0 0 1 0 12" /></svg>
        <span className="ml-[23px] text-[15px] font-['DejaVu_Sans',sans-serif]">ع</span>
        <div className="ml-[26px] w-[72px] text-center text-[15px] leading-[23px]">
          <div>4:07 PM</div>
          <div>4/19/2025</div>
        </div>
        <div className="relative ml-[24px] w-[28px] h-[40px]">
          <svg viewBox="0 0 20 20" className="absolute left-0 top-[4px] w-[20px] h-[20px]" fill="#eee"><path d="M0 0h20v15H6l-3 4v-4H0z" /><path d="M4 4h12M4 7.500h12M4 11h8" stroke="#444" /></svg>
          <div className="absolute left-[10px] top-[13px] w-[20px] h-[20px] rounded-full border border-[#aaa] bg-[#1c1d20] text-[13px] flex items-center justify-center">4</div>
        </div>
      </div>
    </div>
  );
}

export default function App() {
  return (
    <div className="relative w-[1600px] h-[900px] overflow-hidden flex flex-col bg-[#f3f2f1] font-['Open_Sans','DejaVu_Sans',sans-serif]">
      <div className="h-[43px] bg-[#3b3a39] border-b border-[#8a8886] flex items-center text-white shrink-0">
        <svg viewBox="0 0 20 20" className="w-[20px] h-[20px] ml-[20px]" fill="none" stroke="#eee" strokeWidth="1.200"><path d="M1 1h14l4 4v14H1z" /><path d="M5 1v6h9V1M5 19v-8h10v8" /></svg>
        <Undo2 size={20} strokeWidth={1} className="ml-[16px] text-[#8a8886]" />
        <Redo2 size={20} strokeWidth={1} className="ml-[18px] text-[#8a8886]" />
        <span className="ml-[11px] mt-[5px] text-[14.200px] w-[444px] whitespace-nowrap">solimania presentation project&nbsp; • Last saved: 2/21/2025 at 10:42 PM</span>
        <span className="ml-[6px] w-0 h-0 border-x-[6px] border-x-transparent border-t-[6px] border-t-white" />
        <div className="ml-[141px] w-[500px] h-[30px] bg-[#d2d0ce] rounded-[2px] flex items-center pl-[20px] text-[#3d5a5a] text-[16px]">
          <Search size={22} strokeWidth={1.3} className="scale-x-[-1] text-[#222] mr-[14px]" /><span className="mt-[3px]">Search</span>
        </div>
        <span className="ml-[105px] text-[14.500px]">Sign in</span>
        <div className="ml-[12px] w-[25px] h-[25px] rounded-full bg-white flex flex-col items-center justify-center">
          <span className="w-[6px] h-[6px] rounded-full border border-[#222]" />
          <span className="w-[14px] h-[8px] rounded-b-full border border-[#222] mt-[1px]" />
        </div>
        <Minus size={16} strokeWidth={1.2} className="ml-[39px]" />
        <Square size={14} strokeWidth={1.2} className="ml-[40px]" />
        <X size={20} strokeWidth={1.2} className="ml-[37px]" />
      </div>
      <div className="h-[48px] bg-[#fdfdfd] flex shrink-0 text-[17px] text-[#3b3a39] relative">
        <span className="ml-[29px] mt-[6px] w-[72px]">File</span>
        <div className="mt-[6px] h-[32px] w-[48px] border-b-[3px] border-[#117865] font-semibold text-[#252423]">Home</div>
        <span className="ml-[39px] mt-[6px] w-[43px]">Insert</span>
        <span className="ml-[39px] mt-[6px] w-[75px]">Modeling</span>
        <span className="ml-[39px] mt-[6px] w-[37px]">View</span>
        <span className="ml-[39px] mt-[6px] w-[71px]">Optimize</span>
        <span className="ml-[39px] mt-[6px]">Help</span>
        <div className="absolute left-[1488px] top-[4px] w-[104px] h-[30px] rounded-[4px] bg-[#117865] text-white flex items-center pl-[8px] text-[14.500px]">
          <svg viewBox="0 0 22 22" className="w-[22px] h-[22px]" fill="none" stroke="#fff" strokeWidth="1.200"><path d="M2 6v14h14M5 16c0-5 4-8 8-8V3l7 7-7 6v-4c-3 0-6 1-8 4z" /></svg>
          <span className="ml-[8px]">Share</span>
          <ChevronDown size={16} strokeWidth={1.6} className="ml-[3px]" />
        </div>
      </div>
      <Ribbon />
      <div className="flex flex-1 min-h-0 border-t border-[#e1dfdd]">
        <div className="w-[51px] shrink-0 border-r border-[#e1dfdd] bg-[#f3f2f1] relative flex flex-col items-center">
          <div className="absolute left-0 top-0 w-[3px] h-[48px] bg-[#117865]" />
          <svg viewBox="0 0 18 18" className="w-[18px] h-[18px] mt-[14px]" fill="none" stroke="#333" strokeWidth="1.200"><path d="M1 1v16h16" /><rect x="4" y="5" width="2.500" height="9" /><rect x="9" y="8" width="2.500" height="6" /><rect x="14" y="2" width="2.500" height="12" /></svg>
          <svg viewBox="0 0 20 19" className="w-[20px] h-[19px] mt-[30px]" fill="none" stroke="#777" strokeWidth="1.100"><rect x="1" y="1" width="18" height="17" /><path d="M1 5h18M1 9.500h18M1 14h18M7 5v13M13 5v13" /></svg>
          <svg viewBox="0 0 24 24" className="w-[24px] h-[24px] mt-[28px]" fill="none" stroke="#777" strokeWidth="1.100"><rect x="1" y="8" width="10" height="10" /><path d="M1 13h10" /><rect x="14" y="1" width="9" height="11" /><path d="M14 6h9M11 10h3" /><rect x="14" y="12" width="9" height="10" /><path d="M14 17h9" /></svg>
          <svg viewBox="0 0 24 26" className="w-[24px] h-[26px] mt-[29px]" fill="none" stroke="#777" strokeWidth="1.100"><path d="M6 14V1h9l6 6v13M15 1v6h6" /><text x="0" y="23" fontSize="8" fill="#777" stroke="none" fontWeight="700" fontFamily="Open Sans">DAX</text></svg>
        </div>
        <div className="w-[1097px] shrink-0 flex flex-col">
          <div className="flex">
            <ReportCanvas />
            <div className="w-[40px] h-[638px] bg-white border-l border-[#e1dfdd] flex flex-col items-center">
              <ChevronsLeft size={26} strokeWidth={1.3} className="mt-[8px] text-[#333]" />
              <svg viewBox="0 0 16 16" className="w-[16px] h-[16px] mt-[14px]" fill="none" stroke="#333" strokeWidth="1.200"><path d="M14 1v14L7 9H1z" /></svg>
              <span className="mt-[11px] text-[18px] font-semibold text-[#252423] [writing-mode:vertical-rl]">Filters</span>
            </div>
          </div>
          <Tabs />
        </div>
        <VizPane />
        <DataPane />
      </div>
      <div className="h-[29px] bg-[#f3f2f1] border-t border-[#e1dfdd] flex items-center shrink-0 text-[14px] text-[#555]">
        <span className="ml-[5px] w-[1331px]">Page 3 of 5</span>
        <span className="w-[11px]">-</span>
        <div className="relative w-[125px] h-[14px]">
          <div className="absolute left-0 right-0 top-[6px] h-px bg-[#555]" />
          <div className="absolute left-[37px] top-0 w-[4px] h-[14px] bg-[#555]" />
          <div className="absolute left-[62px] top-[4px] w-px h-[6px] bg-[#555]" />
        </div>
        <Plus size={14} strokeWidth={2} className="ml-[4px]" />
        <span className="ml-[14px] w-[30px]">66%</span>
        <svg viewBox="0 0 20 20" className="w-[20px] h-[20px] ml-[23px]" fill="none" stroke="#555"><rect x="0.500" y="0.500" width="19" height="19" strokeWidth="1.500" /><path d="M4 7V4h3M16 7V4h-3M4 13v3h3M16 13v3h-3" strokeWidth="1.200" /></svg>
      </div>
      <TaskBar />
      <div className="absolute left-[1249px] top-[752px] text-[#b5b3b1]/90 pointer-events-none">
        <div className="text-[24px] leading-[34px]">Activate Windows</div>
        <div className="text-[16.300px] leading-[24px] mt-[1px]">Go to Settings to activate Windows.</div>
      </div>
      <div className="absolute left-[708px] top-[790px] w-[200px] text-center text-[#8f8f8f]/30 pointer-events-none font-['DejaVu_Sans',sans-serif]">
        <div dir="rtl" className="text-[58px] leading-[64px] font-bold">مستقل</div>
        <div className="text-[27px] leading-[26px] ml-[4px]">mostaql.com</div>
      </div>
    </div>
  );
}
